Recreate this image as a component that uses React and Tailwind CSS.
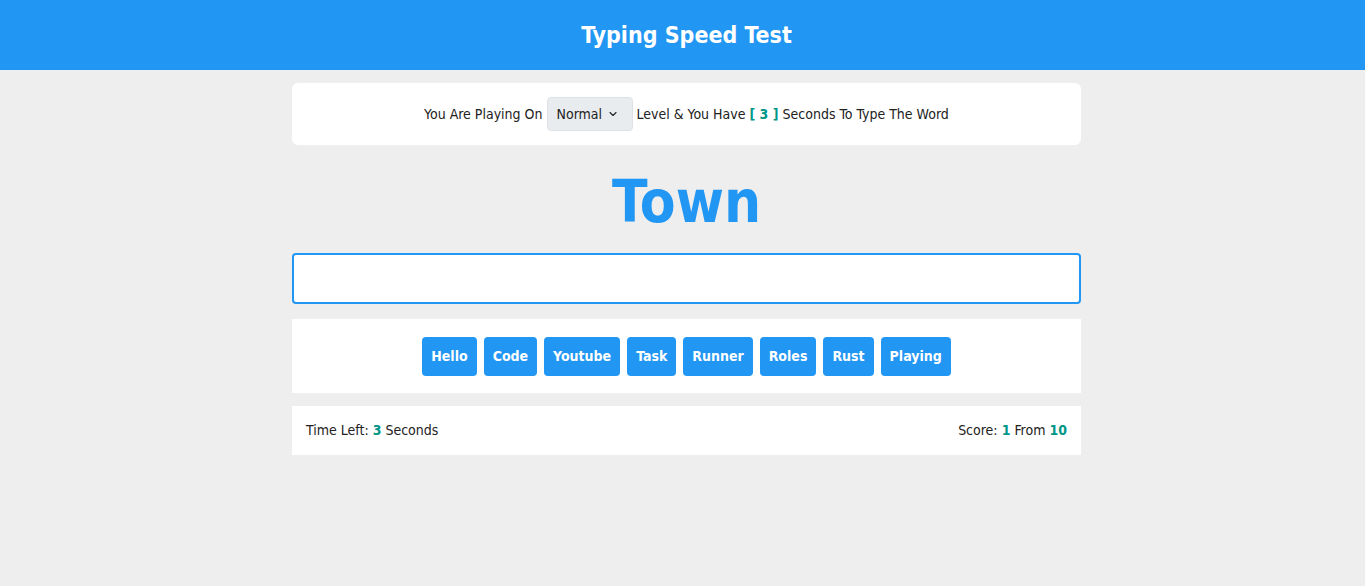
import React from "react";
import { ChevronDown } from "lucide-react";

const words = ["Hello", "Code", "Youtube", "Task", "Runner", "Roles", "Rust", "Playing"];

export default function App() {
  const [value, setValue] = React.useState("");

  return (
    <div className="min-h-screen w-full overflow-hidden bg-[#eeeeee]">
      <div
        className="w-[1373px] text-[14px] text-[#222]"
        style={{ fontFamily: '"DejaVu Sans", Verdana, sans-serif', fontStretch: "condensed" }}
      >
        {/* Header */}
        <div className="flex h-[70px] items-center justify-center bg-[#2196f3]">
          <h1 className="text-[23px] font-bold text-white">Typing Speed Test</h1>
        </div>

        <div className="mx-auto w-[789px]">
          {/* Level */}
          <div className="mt-[13px] flex h-[62px] items-center justify-center rounded-md bg-white">
            <span>You Are Playing On</span>
            <div className="mx-[4px] flex h-[34px] w-[86px] items-center justify-between rounded-[4px] border border-[#dee2e6] bg-[#e9ecef] pl-[9px] pr-[13px]">
              <span>Normal</span>
              <ChevronDown className="h-[12px] w-[12px]" strokeWidth={2.2} />
            </div>
            <span>Level &amp; You Have</span>
            <span className="mx-[4px] font-bold text-[#009688]">[ 3 ]</span>
            <span>Seconds To Type The Word</span>
          </div>

          {/* Word */}
          <div className="mt-[22px] flex justify-center">
            <div className="text-[58px] font-bold leading-[70px] text-[#2196f3]">Town</div>
          </div>

          {/* Input */}
          <input
            value={value}
            onChange={(e) => setValue(e.target.value)}
            className="mt-[16px] block h-[51px] w-full rounded-[4px] border-2 border-[#2196f3] bg-white px-3 text-[16px] outline-none"
          />

          {/* Upcoming words */}
          <div className="mt-[15px] flex h-[74px] items-center justify-center gap-[7px] bg-white">
            {words.map((w) => (
              <span
                key={w}
                className="flex h-[39px] items-center rounded-[4px] bg-[#2196f3] px-[9px] font-bold text-white"
              >
                {w}
              </span>
            ))}
          </div>

          {/* Control */}
          <div className="mt-[13px] flex h-[49px] items-center justify-between bg-white px-[14px]">
            <div>
              Time Left: <span className="font-bold text-[#009688]">3</span> Seconds
            </div>
            <div>
              Score: <span className="font-bold text-[#009688]">1</span> From{" "}
              <span className="font-bold text-[#009688]">10</span>
            </div>
          </div>
        </div>
      </div>
    </div>
  );
}
